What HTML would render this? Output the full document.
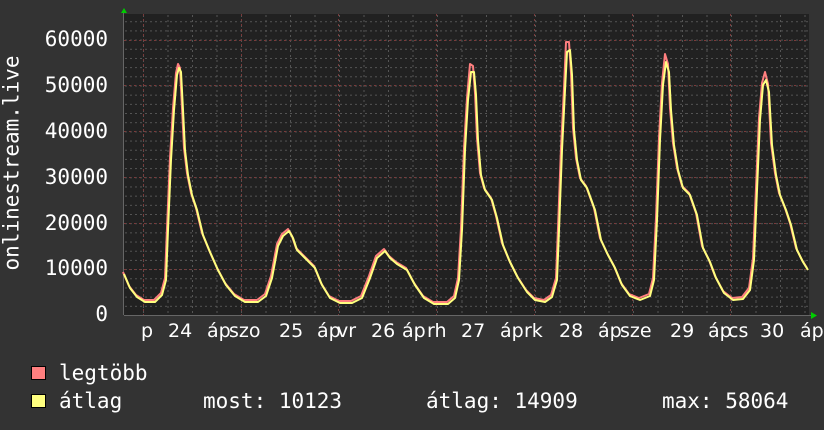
<!DOCTYPE html>
<html><head><meta charset="utf-8"><style>
html,body{margin:0;padding:0;background:#333333;}
#c{position:relative;width:824px;height:430px;overflow:hidden;background:#333333;font-family:"DejaVu Sans Mono","Liberation Mono",monospace;color:#fff;}
.t{position:absolute;white-space:pre;line-height:1;}
.yl{font-size:21px;right:716px;}
.xl{font-family:"DejaVu Sans","Liberation Sans",sans-serif;font-size:19px;top:322px;}
.sq{position:absolute;width:13px;height:12px;border:1px solid #000;}
</style></head><body><div id="c">
<svg width="824" height="430" style="position:absolute;left:0;top:0">
<defs>
<pattern id="mh" x="0" y="315" width="686" height="9.18" patternUnits="userSpaceOnUse"><line x1="0" y1="0.5" x2="686" y2="0.5" stroke="#555" stroke-width="1" stroke-dasharray="2,3"/></pattern>
<pattern id="mv" x="143" y="0" width="24.5" height="301" patternUnits="userSpaceOnUse"><line x1="0.5" y1="0" x2="0.5" y2="301" stroke="#555" stroke-width="1" stroke-dasharray="2,3"/></pattern>
</defs>
<rect x="124" y="14" width="685" height="301" fill="#212121"/>
<rect x="124" y="14" width="685" height="301" fill="url(#mh)"/>
<rect x="124" y="14" width="685" height="301" fill="url(#mv)"/>
<g stroke="#7a3a3a" stroke-width="1" stroke-dasharray="2,3">
<line x1="124" y1="269.5" x2="809" y2="269.5"/><line x1="124" y1="223.5" x2="809" y2="223.5"/><line x1="124" y1="177.5" x2="809" y2="177.5"/><line x1="124" y1="131.5" x2="809" y2="131.5"/><line x1="124" y1="85.5" x2="809" y2="85.5"/><line x1="124" y1="40.5" x2="809" y2="40.5"/>
<line x1="143.5" y1="14" x2="143.5" y2="315"/><line x1="241.5" y1="14" x2="241.5" y2="315"/><line x1="338.5" y1="14" x2="338.5" y2="315"/><line x1="436.5" y1="14" x2="436.5" y2="315"/><line x1="534.5" y1="14" x2="534.5" y2="315"/><line x1="632.5" y1="14" x2="632.5" y2="315"/><line x1="730.5" y1="14" x2="730.5" y2="315"/>
</g>
<line x1="124" y1="315.5" x2="812" y2="315.5" stroke="#666"/>
<line x1="123.5" y1="10" x2="123.5" y2="315" stroke="#666"/>
<polygon points="121,13 124,8 127,13" fill="#00cc00"/>
<polygon points="811,312 817,315.5 811,319" fill="#00cc00"/>
<g fill="none" stroke-width="2" stroke-linejoin="round">
<polyline id="p" transform="translate(-1,-2)" stroke="#ff7f7f" points="124,274 130,288 137,297 145,302 155,302 162,295 166,280 168,230 171,160 174,110 177,75 179,66 181,70 183,110 185,150 188,175 192,195 197,210 203,235 210,252 218,270 226,285 235,296 245,302 258,302 266,296 272,278 278,246 283,236 289,231 293,238 297,250 305,258 315,268 322,285 330,298 340,303 352,303 362,298 370,278 377,258 385,251 390,258 397,264 407,270 415,285 424,298 434,304 448,304 455,298 459,280 462,230 465,150 468,100 471,66 474,68 476,95 478,140 481,175 485,190 492,200 497,218 503,245 510,262 518,278 527,292 535,300 545,302 552,297 557,280 559,230 562,150 565,90 567,44 570,44 572,75 574,130 577,160 581,180 587,188 595,210 601,240 608,255 615,268 622,285 630,296 640,300 650,296 654,280 657,220 660,140 663,85 666,56 669,66 671,110 674,145 678,170 683,188 690,195 697,215 703,248 710,262 716,278 724,293 733,300 743,299 750,290 754,260 757,190 760,120 763,85 766,74 769,86 772,145 776,175 780,195 786,210 791,225 797,250 803,262 808,270"/>
<polyline stroke="#ffff7f" points="124,274 130,288 137,297 145,302 155,302 162,295 166,280 168,230 171,160 174,110 177,75 179,68 181,72 183,110 185,150 188,175 192,195 197,210 203,235 210,252 218,270 226,285 235,296 245,302 258,302 266,296 272,278 278,246 283,236 289,231 293,238 297,250 305,258 315,268 322,285 330,298 340,303 352,303 362,298 370,278 377,258 385,251 390,258 397,264 407,270 415,285 424,298 434,304 448,304 455,298 459,280 462,230 465,150 468,100 471,72 474,72 476,95 478,140 481,175 485,190 492,200 497,218 503,245 510,262 518,278 527,292 535,300 545,302 552,297 557,280 559,230 562,150 565,90 567,52 570,50 572,75 574,130 577,160 581,180 587,188 595,210 601,240 608,255 615,268 622,285 630,296 640,300 650,296 654,280 657,220 660,140 663,85 666,62 669,72 671,110 674,145 678,170 683,188 690,195 697,215 703,248 710,262 716,278 724,293 733,300 743,299 750,290 754,260 757,190 760,120 763,85 766,80 769,92 772,145 776,175 780,195 786,210 791,225 797,250 803,262 808,270"/>
</g>
</svg>
<div class="t yl" style="top:29px">60000</div>
<div class="t yl" style="top:75px">50000</div>
<div class="t yl" style="top:121px">40000</div>
<div class="t yl" style="top:167px">30000</div>
<div class="t yl" style="top:213px">20000</div>
<div class="t yl" style="top:258px">10000</div>
<div class="t yl" style="top:304px">0</div>
<div class="t" style="font-size:21px;left:12px;top:163px;transform:translate(-50%,-50%) rotate(-90deg);">onlinestream.live</div>
<div class="t xl" style="left:141px">p</div>
<div class="t xl" style="left:168px">24</div>
<div class="t xl" style="left:207px">áp</div>
<div class="t xl" style="left:229px">szo</div>
<div class="t xl" style="left:279px">25</div>
<div class="t xl" style="left:317px">áp</div>
<div class="t xl" style="left:337px">vr</div>
<div class="t xl" style="left:371px">26</div>
<div class="t xl" style="left:402px">áp</div>
<div class="t xl" style="left:427px">rh</div>
<div class="t xl" style="left:461px">27</div>
<div class="t xl" style="left:500px">áp</div>
<div class="t xl" style="left:524px">rk</div>
<div class="t xl" style="left:559px">28</div>
<div class="t xl" style="left:598px">áp</div>
<div class="t xl" style="left:620px">sze</div>
<div class="t xl" style="left:670px">29</div>
<div class="t xl" style="left:708px">áp</div>
<div class="t xl" style="left:728px">cs</div>
<div class="t xl" style="left:760px">30</div>
<div class="t xl" style="left:800px">áp</div>
<div class="sq" style="left:31px;top:366px;background:#ff7f7f"></div>
<div class="sq" style="left:31px;top:394px;background:#ffff7f"></div>
<div class="t" style="font-size:21px;left:59px;top:363px">legtöbb</div>
<div class="t" style="font-size:21px;left:59px;top:391px">átlag</div>
<div class="t" style="font-size:21px;left:203px;top:391px">most: 10123</div>
<div class="t" style="font-size:21px;left:426px;top:391px">átlag: 14909</div>
<div class="t" style="font-size:21px;left:662px;top:391px">max: 58064</div>
</div></body></html>
